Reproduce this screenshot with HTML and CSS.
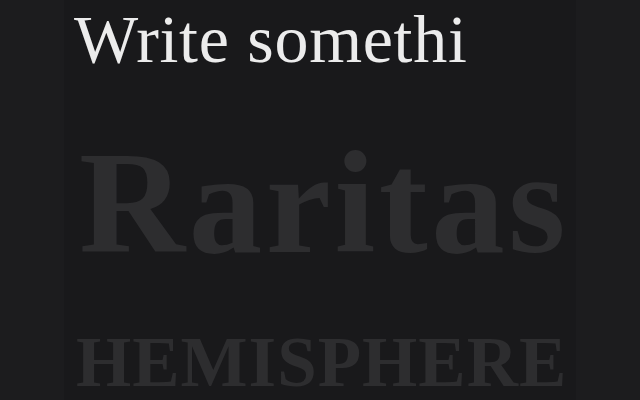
FILE: index.html
```html
<!DOCTYPE html>
<html lang="en">
<head>
    <meta charset="UTF-8">
    <meta name="viewport" content="width=device-width, initial-scale=1.0">
    <title>Raritas Hemisphere</title>
    <link rel="stylesheet" href="styles.css">
</head>
<body>
    <div class="sheet">
        <div class="prompt">Write somethi</div>
        <div class="title">Raritas</div>
        <div class="subtitle">HEMISPHERE</div>
    </div>
</body>
</html>
```

FILE: styles.css
```css
body {
    margin: 0;
    padding: 0;
    background-color: #1c1c1e;
    font-family: "Liberation Serif", "Times New Roman", serif;
    overflow: hidden;
}
.sheet {
    width: 512px;
    height: 400px;
    margin: 0 auto;
    box-sizing: border-box;
    padding: 5px 0 0 10px;
    background-color: #19191b;
    display: flex;
    flex-direction: column;
}
.prompt {
    font-size: 68px;
    line-height: 1;
    letter-spacing: 0.7px;
    color: #ececec;
    white-space: nowrap;
}
.title {
    margin-top: 56px;
    margin-left: 5px;
    font-size: 147px;
    font-weight: bold;
    line-height: 1;
    letter-spacing: 3.5px;
    color: #2d2d2f;
    white-space: nowrap;
}
.subtitle {
    margin-top: 51px;
    margin-left: 2px;
    font-size: 71px;
    font-weight: bold;
    line-height: 1;
    letter-spacing: 1px;
    color: #2d2d2f;
    white-space: nowrap;
}
```
